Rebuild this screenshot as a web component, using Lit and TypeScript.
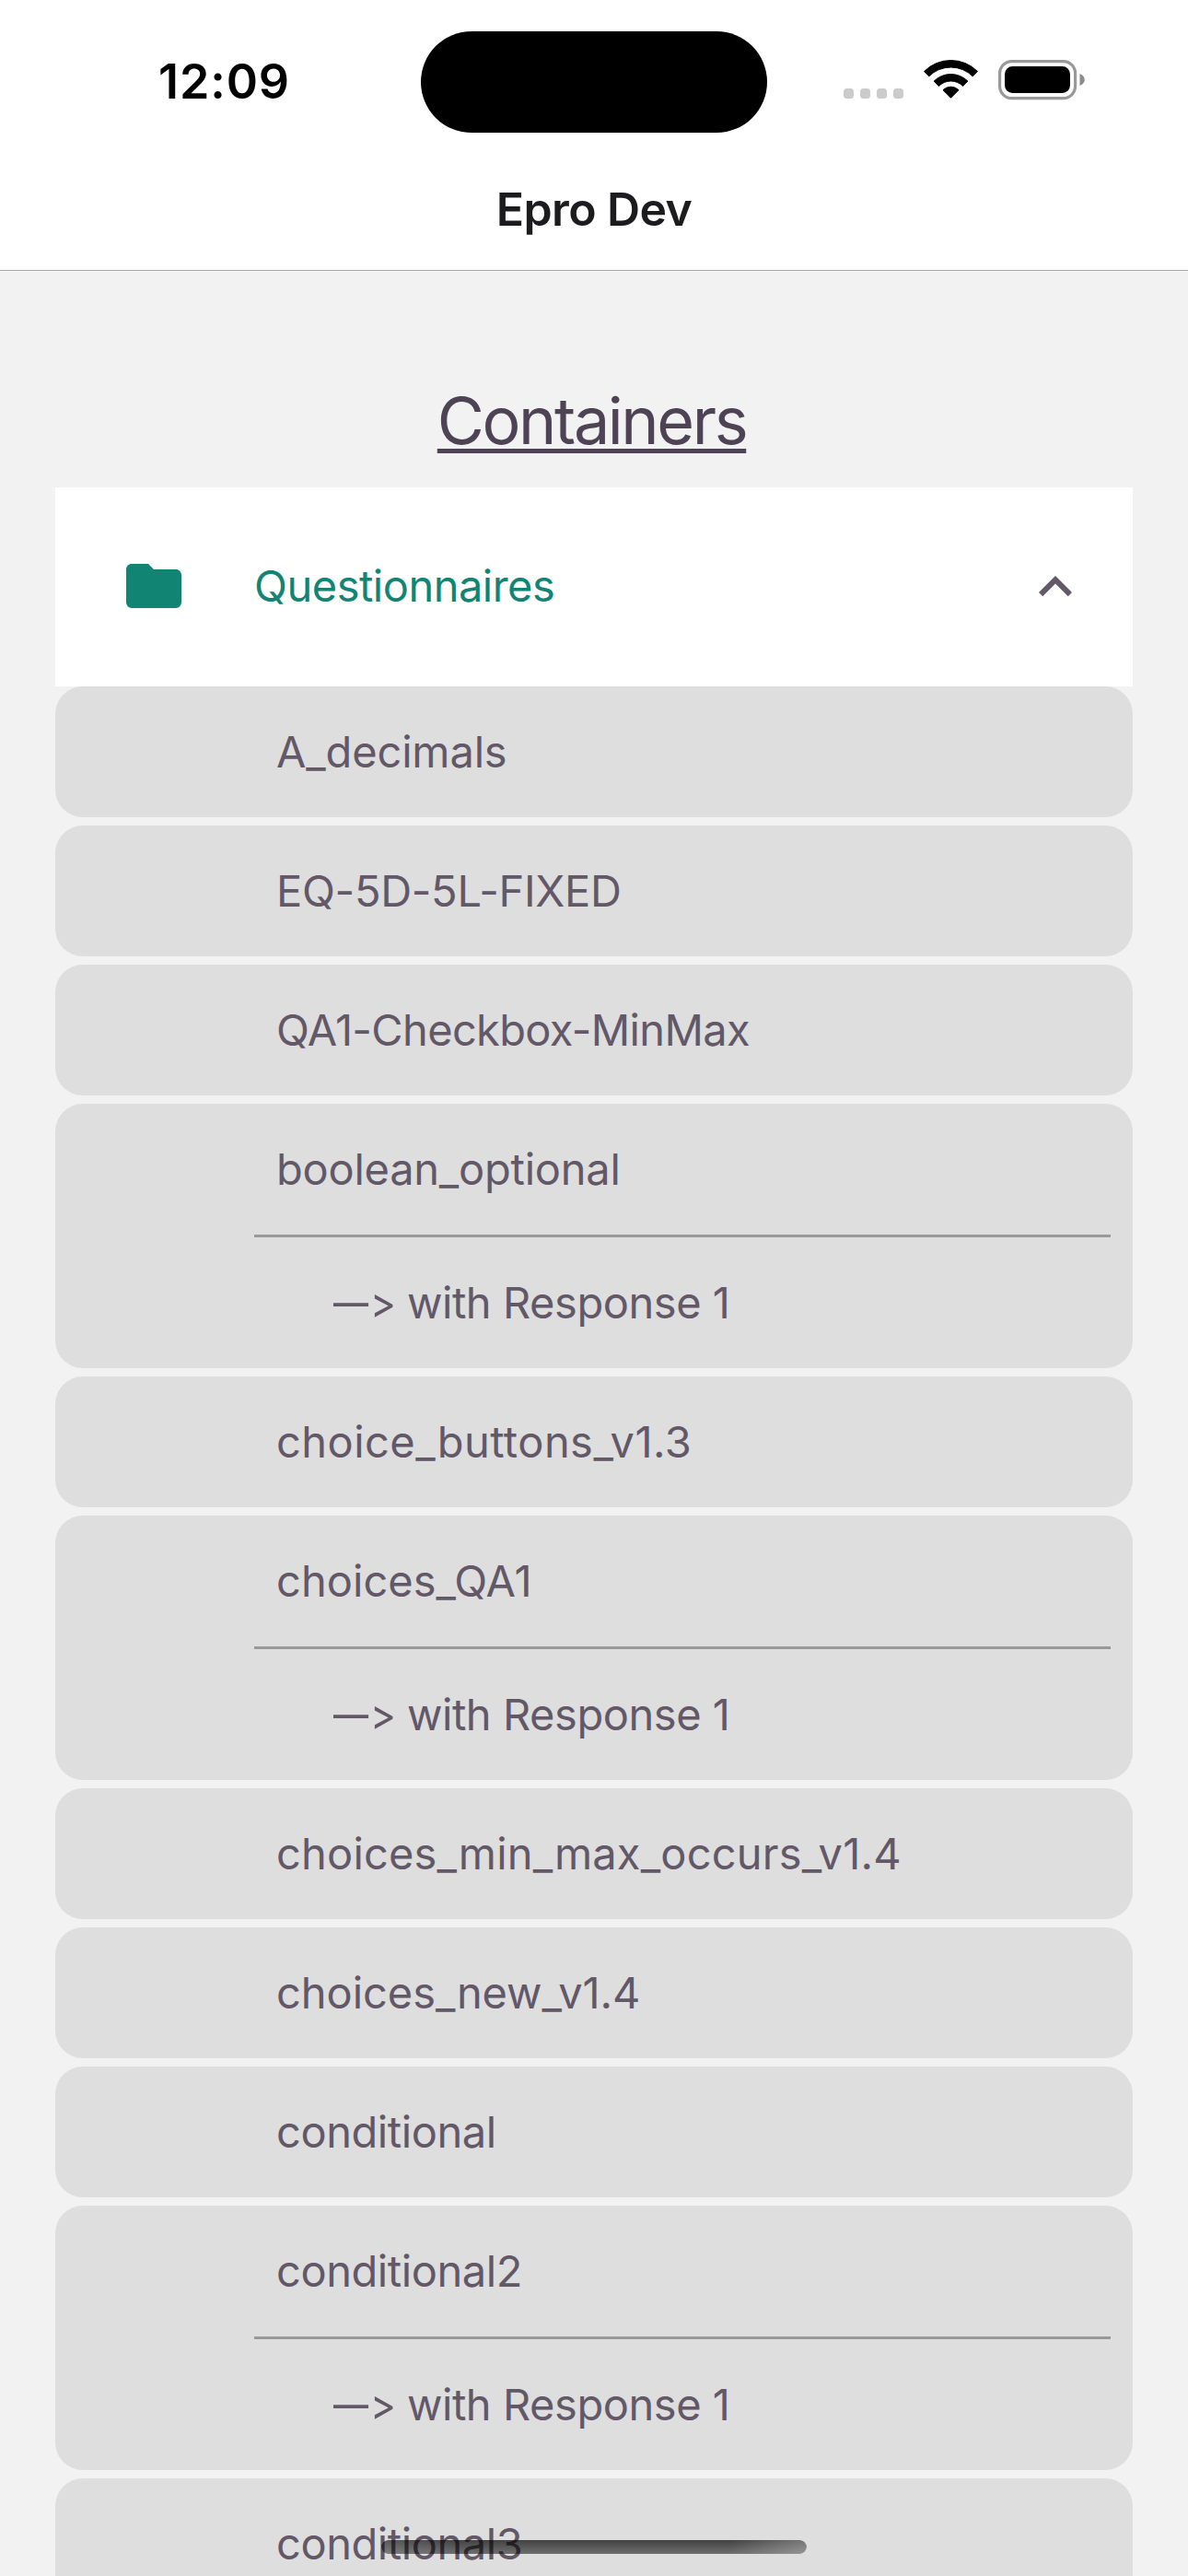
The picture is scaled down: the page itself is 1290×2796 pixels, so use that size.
import { LitElement, html, css, svg, nothing } from "lit";
import { customElement, property } from "lit/decorators.js";
import { styleMap } from "lit/directives/style-map.js";

interface Questionnaire {
  name: string;
  tracking: number;
  response?: boolean;
}

const QUESTIONNAIRES: Questionnaire[] = [
  { name: "A_decimals", tracking: -0.15 },
  { name: "EQ-5D-5L-FIXED", tracking: -0.3 },
  { name: "QA1-Checkbox-MinMax", tracking: -0.65 },
  { name: "boolean_optional", tracking: -0.24, response: true },
  { name: "choice_buttons_v1.3", tracking: 0.46 },
  { name: "choices_QA1", tracking: 0.05, response: true },
  { name: "choices_min_max_occurs_v1.4", tracking: 0.19 },
  { name: "choices_new_v1.4", tracking: -0.05 },
  { name: "conditional", tracking: -0.43 },
  { name: "conditional2", tracking: -0.43, response: true },
  { name: "conditional3", tracking: -0.43 },
];

/** A band of the wifi fan: a 90° ring sector that opens upwards from (cx, cy). */
const fan = (cx: number, cy: number, outer: number, inner: number) => {
  const o = outer * Math.SQRT1_2;
  const i = inner * Math.SQRT1_2;
  return svg`<path d="M${cx - o} ${cy - o}A${outer} ${outer} 0 0 1 ${cx + o} ${cy - o}L${cx + i} ${cy - i}A${inner || 1} ${inner || 1} 0 0 0 ${cx - i} ${cy - i}Z"></path>`;
};

@customElement("status-bar")
export class StatusBar extends LitElement {
  static styles = css`
    :host {
      display: flex;
      align-items: center;
      height: 177px;
      padding-left: 172px;
      box-sizing: border-box;
      color: #000;
    }
    .time {
      width: 285px;
      font-size: 52px;
      font-weight: 600;
      line-height: 64px;
      letter-spacing: 0.9px;
    }
    .island {
      width: 376px;
      height: 110px;
      border-radius: 55px;
      background: #000;
      margin-right: 83px;
    }
    .indicators {
      display: block;
      width: 264px;
      height: 53px;
    }
  `;

  render() {
    return html`
      <div class="time">12:09</div>
      <div class="island"></div>
      <svg class="indicators" viewBox="916 62 264 53">
        <g fill="#cbcbcb">
          ${[916, 934, 952, 970].map(
            (x) => svg`<rect x=${x} y="96" width="11" height="11" rx="3.5"></rect>`
          )}
        </g>
        <g fill="#000" stroke="#000" stroke-width="1" stroke-linejoin="round">
          ${fan(1032.5, 106.5, 41, 33.5)} ${fan(1032.5, 106.5, 26, 18.5)}
          ${fan(1032.5, 106.2, 12, 0)}
        </g>
        <rect x="1085.6" y="66.6" width="82" height="40" rx="13" fill="none" stroke="#999" stroke-width="3.2"></rect>
        <rect x="1091" y="72" width="71" height="29" rx="8.5"></rect>
        <path d="M1172.5 80C1179.5 82.5 1179.5 90.5 1172.5 93Z" fill="#8c8c8c"></path>
      </svg>
    `;
  }
}

@customElement("questionnaire-item")
export class QuestionnaireItem extends LitElement {
  @property({ attribute: false }) item!: Questionnaire;

  static styles = css`
    :host {
      display: block;
      flex: none;
      padding: 0 24px 0 216px;
      border-radius: 30px;
      background: #dedede;
      color: #625867;
      font-size: 47px;
      line-height: 142px;
      white-space: nowrap;
    }
    .name {
      padding-left: 24px;
    }
    .response {
      display: flex;
      padding-left: 86px;
      border-top: 3px solid #999;
      font-feature-settings: "calt" 0, "liga" 0;
    }
    .dash {
      width: 40px;
      transform: scaleX(0.81);
      transform-origin: left;
    }
    .head {
      width: 40px;
      transform: scaleX(0.9);
      transform-origin: left;
    }
    .label {
      letter-spacing: -0.45px;
    }
  `;

  render() {
    const { name, tracking, response } = this.item;
    return html`
      <div class="name" style=${styleMap({ letterSpacing: `${tracking}px` })}>${name}</div>
      ${response
        ? html`<div class="response">
            <span class="dash">—</span><span class="head">&gt;</span
            ><span class="label">with Response 1</span>
          </div>`
        : nothing}
    `;
  }
}

@customElement("app-root")
export class AppRoot extends LitElement {
  static styles = css`
    :host {
      display: block;
    }
    .screen {
      position: relative;
      display: flex;
      flex-direction: column;
      width: 1290px;
      height: 2796px;
      overflow: hidden;
      background: #f2f2f2;
      font-family: Inter, "Liberation Sans", sans-serif;
    }
    .header {
      flex: none;
      background: #fff;
      border-bottom: 1px solid #a7a8aa;
    }
    .title {
      padding-bottom: 16px;
      font-size: 50px;
      font-weight: 600;
      line-height: 100px;
      letter-spacing: -0.6px;
      text-align: center;
      color: #1c1c1e;
    }
    .content {
      display: flex;
      flex-direction: column;
      padding: 112px 60px 0;
    }
    .heading {
      margin: 0 0 22px;
      padding-right: 5px;
      font-size: 70px;
      font-weight: 400;
      line-height: 101px;
      letter-spacing: -2.4px;
      text-align: center;
      text-decoration: underline;
      text-decoration-thickness: 5px;
      text-underline-offset: 5px;
      text-decoration-skip-ink: none;
      color: #4e4354;
    }
    .accordion {
      display: flex;
      align-items: center;
      height: 216px;
      padding: 0 48px 0 71px;
      background: #fff;
    }
    .folder {
      width: 72px;
      height: 72px;
      margin: -2px 73px 0 0;
      fill: #118473;
    }
    .section {
      flex: 1;
      font-size: 47px;
      line-height: 214px;
      padding-bottom: 2px;
      letter-spacing: -0.5px;
      color: #118473;
    }
    .chevron {
      width: 72px;
      height: 72px;
      fill: #625867;
    }
    .list {
      display: flex;
      flex-direction: column;
      gap: 9px;
    }
    .home {
      position: absolute;
      left: 414px;
      top: 2757px;
      width: 462px;
      height: 15px;
      border-radius: 7.5px;
      background: linear-gradient(rgba(0, 0, 0, 0.7), rgba(0, 0, 0, 0.5));
      mask-image: linear-gradient(100deg, rgba(0, 0, 0, 0.85), #000 18%, #000 82%, rgba(0, 0, 0, 0.65));
    }
  `;

  render() {
    return html`
      <div class="screen">
        <header class="header">
          <status-bar></status-bar>
          <div class="title">Epro Dev</div>
        </header>
        <main class="content">
          <h1 class="heading">Containers</h1>
          <div class="accordion">
            <svg class="folder" viewBox="0 0 24 24">
              <path d="M10,4H4C2.89,4 2,4.89 2,6V18A2,2 0 0,0 4,20H20A2,2 0 0,0 22,18V8C22,6.89 21.1,6 20,6H12L10,4Z"></path>
            </svg>
            <div class="section">Questionnaires</div>
            <svg class="chevron" viewBox="0 0 24 24">
              <path d="M7.41,15.41L12,10.83L16.59,15.41L18,14L12,8L6,14L7.41,15.41Z"></path>
            </svg>
          </div>
          <div class="list">
            ${QUESTIONNAIRES.map((q) => html`<questionnaire-item .item=${q}></questionnaire-item>`)}
          </div>
        </main>
        <div class="home"></div>
      </div>
    `;
  }
}
